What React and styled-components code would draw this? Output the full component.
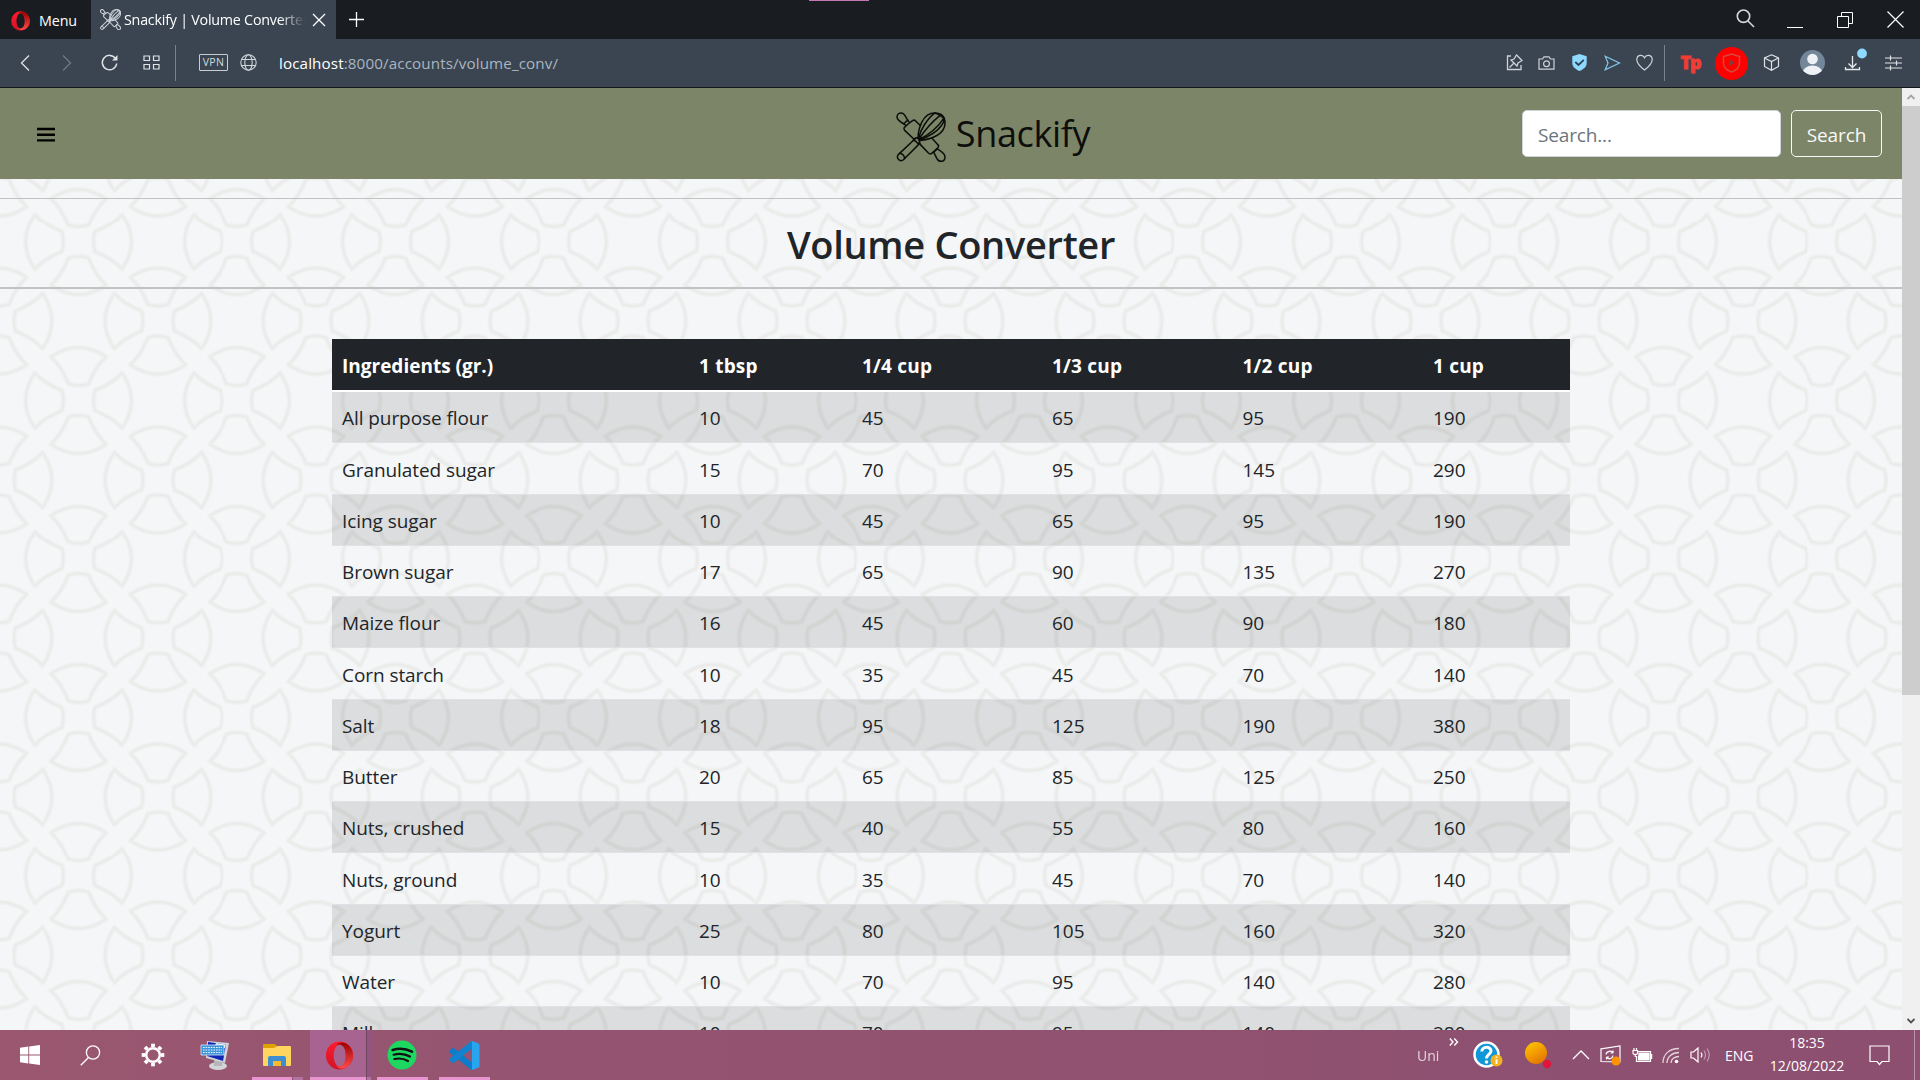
import React from "react";
import styled, { createGlobalStyle } from "styled-components";

const ui = `"Open Sans", "Noto Sans", sans-serif`;

const petal = "M-10 -16.500Q0 -13.500 10 -16.500Q17 -34 27.500 -43.500Q0 -62 -27.500 -43.500Q-17 -34 -10 -16.500Z";
const tile = `<svg xmlns='http://www.w3.org/2000/svg' width='158.5' height='158.5' viewBox='0 0 158.5 158.5'><defs><g id='p'><path d='${petal}'/><path d='${petal}' transform='rotate(90)'/><path d='${petal}' transform='rotate(180)'/><path d='${petal}' transform='rotate(270)'/></g><g id='c' fill='none' stroke-linejoin='round'><use href='#p' stroke='#f0f2f2' stroke-width='5.4'/><use href='#p' stroke='#ebecea' stroke-width='2.4'/></g></defs><use href='#c' x='79.25' y='79.25'/><use href='#c'/><use href='#c' x='158.5'/><use href='#c' y='158.5'/><use href='#c' x='158.5' y='158.5'/></svg>`;
const patternUrl = `url("data:image/svg+xml,${encodeURIComponent(tile).replace(/'/g, "%27").replace(/\(/g, "%28").replace(/\)/g, "%29")}")`;

const GlobalStyle = createGlobalStyle`
  * { box-sizing: border-box; }
  html, body { margin: 0; padding: 0; overflow: hidden; }
  body { font-family: ${ui}; }
  svg { display: block; flex: none; }
`;

const Screen = styled.div`
  width: 1920px;
  height: 1080px;
  display: flex;
  flex-direction: column;
  overflow: hidden;
`;

/* ---------- browser chrome ---------- */

const TabBar = styled.div`
  height: 39px;
  display: flex;
  align-items: stretch;
  background: #191d21;
  color: #fff;
  position: relative;
`;

const TopMarker = styled.div`
  position: absolute;
  left: 809px;
  top: 0;
  width: 60px;
  height: 1px;
  background: #c377b0;
`;

const MenuButton = styled.div`
  width: 91px;
  padding: 2px 0 0 11px;
  display: flex;
  align-items: center;
  gap: 9px;
  font-size: 14.3px;
  letter-spacing: -0.1px;
`;

const Tab = styled.div`
  width: 245px;
  background: #3a4551;
  display: flex;
  align-items: center;
  padding: 0 10px 0 9px;
`;

const TabTitle = styled.div`
  width: 181px;
  margin: 0 7px 0 3px;
  overflow: hidden;
  white-space: nowrap;
  font-size: 14.3px;
  letter-spacing: -0.23px;
  mask-image: linear-gradient(90deg, #000 86%, transparent 100%);
`;

const NewTab = styled.div`
  padding: 0 0 2px 12px;
  display: flex;
  align-items: center;
`;

const WindowControls = styled.div`
  margin-left: auto;
  display: flex;
`;

const Slot = styled.div`
  width: ${(p) => p.$w}px;
  display: flex;
  align-items: center;
  justify-content: center;
`;

const Toolbar = styled.div`
  height: 49px;
  background: #3a4551;
  border-bottom: 1px solid #14171b;
  display: flex;
  align-items: stretch;
  padding: 0 6px 1px 4px;
`;

const Divider = styled.div`
  width: 1px;
  margin: 6px ${(p) => p.$right}px 5px ${(p) => p.$left}px;
  background: #79828c;
`;

const VpnBadge = styled.div`
  width: 29px;
  height: 17px;
  align-self: center;
  border: 1px solid #c9ced3;
  border-radius: 1px;
  color: #d5d9dd;
  font-size: 10.5px;
  line-height: 15px;
  letter-spacing: 0.4px;
  text-align: center;
  margin: 0 12px 1px 23px;
`;

const GlobeSlot = styled.div`
  align-self: center;
  margin-bottom: 1px;
`;

const Address = styled.div`
  align-self: center;
  margin: 0 0 0 22px;
  font-size: 15.2px;
  letter-spacing: 0.12px;
  color: #a9b5c0;
  span { color: #fff; }
`;

const ToolbarRight = styled.div`
  margin-left: auto;
  display: flex;
`;

const TpLogo = styled.div`
  color: #f23c36;
  font-family: "Open Sans", sans-serif;
  font-weight: 800;
  font-size: 18px;
  line-height: 20px;
  letter-spacing: -1.3px;
  margin-bottom: 2px;
  -webkit-text-stroke: 0.8px #f23c36;
`;

const RedBadge = styled.div`
  width: 33px;
  height: 33px;
  border-radius: 50%;
  background: #f00;
  display: flex;
  align-items: center;
  justify-content: center;
  margin-top: 1px;
`;

/* ---------- page ---------- */

const Viewport = styled.div`
  height: 942px;
  display: flex;
`;

const Page = styled.main`
  width: 1902px;
  overflow: hidden;
  background: #f4f6f8 ${patternUrl};
  background-size: 158.5px 158.5px;
  background-position: -0.8px 74.7px;
  color: #212529;
`;

const Navbar = styled.header`
  height: 91px;
  background: #7c8567;
  display: grid;
  grid-template-columns: 1fr auto 1fr;
  align-items: center;
  padding: 0 20px 0 37px;
`;

const MenuToggle = styled.div`
  padding-top: 2px;
`;

const Brand = styled.div`
  display: flex;
  align-items: center;
  gap: 10px;
  color: #0d0e0b;
  height: 50px;
  margin: 6px 0 0 67px;
`;

const BrandName = styled.span`
  font-size: 36px;
  line-height: 50px;
  letter-spacing: -0.35px;
  margin-top: -6px;
`;

const SearchForm = styled.div`
  display: flex;
  justify-content: flex-end;
  gap: 10px;
`;

const SearchBox = styled.div`
  width: 259px;
  height: 47px;
  border: 1px solid #ced4da;
  border-radius: 5px;
  background: #fff;
  color: #6c757d;
  font-size: 19px;
  letter-spacing: -0.15px;
  line-height: 48px;
  padding-left: 15px;
`;

const SearchButton = styled.div`
  width: 91px;
  height: 47px;
  border: 1px solid #f8f9fa;
  border-radius: 5px;
  color: #f8f9fa;
  font-size: 19px;
  letter-spacing: -0.1px;
  line-height: 48px;
  text-align: center;
`;

const Rule = styled.div`
  height: ${(p) => p.$h}px;
  background: #c0c2c3;
`;

const TitleBand = styled.section`
  margin-top: 19px;
`;

const Title = styled.h1`
  margin: 0;
  height: 88px;
  padding-top: 1px;
  line-height: 88px;
  font-size: 38px;
  font-weight: 600;
  letter-spacing: -0.3px;
  text-align: center;
`;

const Table = styled.div`
  width: 1238px;
  margin: 50px auto 0;
  font-size: 19px;
`;

const Row = styled.div`
  display: grid;
  grid-template-columns: 357px 163px 190px 190.5px 190.5px 147px;
  align-items: center;
  height: 51.25px;
  padding-top: 2px;
  border-bottom: 1px solid #dee2e6;
  background: ${(p) => (p.$odd ? "rgba(0,0,0,0.1)" : "transparent")};
`;

const HeadRow = styled(Row)`
  height: 53.2px;
  padding-top: 3px;
  background: #212529;
  border-bottom: 2px solid #fff;
  color: #fff;
  font-weight: 700;
`;

const Cell = styled.div`
  padding-left: 10px;
  white-space: nowrap;
  letter-spacing: ${(p) => p.$ls || 0}px;
`;

const Scrollbar = styled.div`
  width: 18px;
  background: #f0f0f0;
  display: flex;
  flex-direction: column;
`;

const ScrollArrow = styled.div`
  height: 18px;
  display: flex;
  align-items: center;
  justify-content: center;
`;

const Thumb = styled.div`
  height: 589px;
  margin-bottom: auto;
  background: #cdcdcd;
`;

/* ---------- taskbar ---------- */

const Taskbar = styled.footer`
  height: 50px;
  display: flex;
  background: linear-gradient(90deg, #9a576f 0%, #935371 35%, #8c4f70 100%);
  color: #fff;
`;

const Task = styled.div`
  width: ${(p) => p.$w || 62}px;
  margin-right: ${(p) => p.$gap || 0}px;
  display: flex;
  flex-direction: column;
  align-items: center;
`;

const TaskIcon = styled.div`
  height: 47px;
  width: ${(p) => (p.$active ? 59 : 40)}px;
  align-self: ${(p) => (p.$active ? "flex-start" : "center")};
  display: flex;
  align-items: center;
  justify-content: center;
  padding-top: 3px;
`;

const ActiveTask = styled(Task)`
  margin-left: 2px;
  width: 61px;
  background: linear-gradient(90deg, #a86491 56px, #6f4560 56px, #6f4560 57px, #905680 57px);
`;

const Underline = styled.div`
  height: 3px;
  width: ${(p) => p.$w}px;
  background: ${(p) =>
    p.$stack ? `linear-gradient(90deg, #e794d1 ${p.$stack}px, #8a4f73 ${p.$stack}px, #8a4f73 ${p.$stack + 1}px, #b373a0 ${p.$stack + 1}px)` : "#e794d1"};
`;

const Tray = styled.div`
  margin-left: auto;
  display: flex;
  align-items: center;
`;

const TrayLabel = styled.div`
  font-size: 14px;
  width: ${(p) => p.$w}px;
  letter-spacing: ${(p) => p.$ls || 0}px;
  opacity: ${(p) => p.$o || 1};
  white-space: nowrap;
`;

const Chevrons = styled.div`
  width: 23px;
  height: 36px;
`;

const Clock = styled.div`
  width: 74px;
  display: flex;
  flex-direction: column;
  align-items: center;
  white-space: nowrap;
  font-size: 14px;
  line-height: 23px;
  letter-spacing: 0;
  margin-bottom: 2px;
`;

const DesktopEdge = styled.div`
  width: 6px;
  height: 50px;
  border-left: 1px solid #bb93a9;
`;

/* ---------- drawings ---------- */

const Line = ({ w = 16, h = w, box, c = "#dfe3e6", sw = 1.3, children }) => (
  <svg width={w} height={h} viewBox={box || `0 0 ${w} ${h}`} fill="none" stroke={c} strokeWidth={sw}>
    {children}
  </svg>
);

const WhiskPin = ({ size, c, sw }) => (
  <svg width={size} height={size} viewBox="0 0 49 49" fill="none" stroke={c} strokeWidth={sw} strokeLinejoin="round" strokeLinecap="round">
    <path d="M7.500 11.500C5 10 1 8.500 1 5C1 2.500 3 1 5 1C8.500 1 9.500 5 11.500 8L7.500 11.500Z" />
    <path d="M11.500 12L8 15.500Q7.500 17 8.500 18L18.500 27.500M11.500 12L16.500 8.200Q18 7.500 19.500 9L24 13.500M11.500 8L12.500 9.500M7.500 11.500L9.500 13" />
    <path d="M19.500 25.500L2.500 41.500C-.5 45 4 50 7.500 46.500L23.500 30.500" />
    <path d="M3.500 40.500Q7.800 41 8.500 45.500" />
    <path d="M17 27.500Q19 24.500 21.500 25.500Q24.500 28 22 31.500Q20 28.500 17 27.500Z" />
    <path d="M21.500 25.500C22 16 26 1 38 1C45 1 48 5 48 11C48 22 34 27 23 28Z" />
    <path d="M22 26C24 17 31 6 38 1M22.500 26.500C28 18 36 9 43.500 3M22.500 27C31 23 41 15 47 6" />
    <path d="M38 1Q44 3 46.500 6Q48 9 44 14Q38 22 23 27.500" />
    <path d="M23.500 31.500L31.500 40Q33.500 42 35 40.500L41 35Q42.500 33.500 41 32L35.500 26" />
    <path d="M37 39.500L40.500 36C43.500 38.500 48 40 48 44C48 49 42 50 40 45.500Z" />
  </svg>
);

const OperaO = ({ w, h }) => (
  <svg width={w} height={h} viewBox="0 0 28 30">
    <defs>
      <linearGradient id="opA" x1="0" y1="0" x2="0" y2="1">
        <stop offset="0" stopColor="#ff1b2d" />
        <stop offset="1" stopColor="#d31325" />
      </linearGradient>
      <linearGradient id="opB" x1="0" y1="0" x2="0" y2="1">
        <stop offset="0" stopColor="#9c0000" />
        <stop offset="1" stopColor="#ff4b4b" />
      </linearGradient>
    </defs>
    <path fillRule="evenodd" fill="url(#opA)" d="M14 0.500a14 14.500 0 1 0 0 29a14 14.500 0 1 0 0 -29zM14.500 3.500c4 0 6 5.500 6 11.500s-2 11.500-6 11.500s-6.500-5.500-6.500-11.500s2.500-11.500 6.500-11.500z" />
    <path fill="url(#opB)" d="M10.500 4.500C14 0 20 1 23.500 4.500C29.500 10 29.500 20 23.500 25.500C20 29 14 30 10.500 25.500C17 28.500 20.500 22 20.500 15S17 1.500 10.500 4.500z" />
  </svg>
);

const headers = ["Ingredients (gr.)", "1 tbsp", "1/4 cup", "1/3 cup", "1/2 cup", "1 cup"];
const rows = [
  ["All purpose flour", 10, 45, 65, 95, 190],
  ["Granulated sugar", 15, 70, 95, 145, 290],
  ["Icing sugar", 10, 45, 65, 95, 190],
  ["Brown sugar", 17, 65, 90, 135, 270],
  ["Maize flour", 16, 45, 60, 90, 180],
  ["Corn starch", 10, 35, 45, 70, 140],
  ["Salt", 18, 95, 125, 190, 380],
  ["Butter", 20, 65, 85, 125, 250],
  ["Nuts, crushed", 15, 40, 55, 80, 160],
  ["Nuts, ground", 10, 35, 45, 70, 140],
  ["Yogurt", 25, 80, 105, 160, 320],
  ["Water", 10, 70, 95, 140, 280],
  ["Milk", 10, 70, 95, 140, 280],
];

function BrowserChrome() {
  return (
    <>
      <TabBar>
        <TopMarker />
        <MenuButton>
          <OperaO w={19} h={20} />
          Menu
        </MenuButton>
        <Tab>
          <WhiskPin size={21} c="#c9cfd4" sw={2.4} />
          <TabTitle>Snackify | Volume Converter</TabTitle>
          <Line w={14} c="#fff"><path d="M1 1L13 13M13 1L1 13" /></Line>
        </Tab>
        <NewTab>
          <Line w={16} c="#fff"><path d="M8.500 1V16M1 8.500H16" /></Line>
        </NewTab>
        <WindowControls>
          <Slot $w={50}><Line w={19} h={21} c="#d6d8da" sw={1.6}><circle cx="7.500" cy="7.200" r="6.200" /><path d="M12 12L18 18" /></Line></Slot>
          <Slot $w={50}><Line w={16} h={16} c="#fff" sw={1}><path d="M0 15.500H16" /></Line></Slot>
          <Slot $w={50}><Line w={16} c="#fff" sw={1}><path d="M.5 4.500H11.500V15.500H.5ZM4.500 4V.5H15.500V11.500H12" /></Line></Slot>
          <Slot $w={50}><Line w={17} c="#fff" sw={1.2}><path d="M.5 .5L16.500 16.500M16.500 .5L.5 16.500" /></Line></Slot>
        </WindowControls>
      </TabBar>
      <Toolbar>
        <Slot $w={42}><Line w={10} h={16}><path d="M9 .5L1.500 8L9 15.500" /></Line></Slot>
        <Slot $w={42}><Line w={10} h={16} c="#6f7983"><path d="M1 .5L8.500 8L1 15.500" /></Line></Slot>
        <Slot $w={42}>
          <Line w={17} sw={1.5}><path d="M14.500 4.500A7.200 7.200 0 1 0 15.700 9.500" /><path d="M16.500 1V6.500H11Z" fill="#dfe3e6" stroke="none" /></Line>
        </Slot>
        <Slot $w={42}>
          <Line w={17} h={15} sw={1.2}><path d="M1 1H6.500V5.500H1ZM10.500 1H16V5.500H10.500ZM1 9.500H6.500V14H1ZM10.500 9.500H16V14H10.500Z" /></Line>
        </Slot>
        <Divider $left={3} $right={0} />
        <VpnBadge>VPN</VpnBadge>
        <GlobeSlot>
          <Line w={17} sw={1.1} c="#d0d5d9"><circle cx="8.500" cy="8.500" r="7.700" /><ellipse cx="8.500" cy="8.500" rx="3.700" ry="7.700" /><path d="M1.500 5.500H15.500M1.500 11.500H15.500" /></Line>
        </GlobeSlot>
        <Address><span>localhost</span>:8000/accounts/volume_conv/</Address>
        <ToolbarRight>
          <Slot $w={32.6}><Line w={17} c="#cdd3d8" sw={1.3}><path d="M5 2H1.500V15.500H15V11" /><path d="M10.500 1L16 6.500L14.500 7.500L12 9L11 12L5 6L8 5L9.500 2.500ZM8 9L3.500 13.500" /></Line></Slot>
          <Slot $w={32.6}><Line w={17} h={14} c="#cdd3d8" sw={1.2}><path d="M1 3H4.500L6 .8H11L12.500 3H16V13.200H1Z" /><circle cx="8.500" cy="7.700" r="2.900" /></Line></Slot>
          <Slot $w={32.6}>
            <svg width="15" height="17" viewBox="0 0 15 17"><path fill="#8fd8ff" d="M7.500 0L14.700 2.200V9C14.700 13 11 15.500 7.500 17C4 15.500 .3 13 .3 9V2.200Z" /><path fill="none" stroke="#2c4455" strokeWidth="1.800" d="M3.300 8L6.500 11L11.800 5.800" /></svg>
          </Slot>
          <Slot $w={32.6}><Line w={17} h={16} c="#84c9ee" sw={1.2}><path d="M1.200 1.300L15.500 8L1.200 14.700L4 8Z" /></Line></Slot>
          <Slot $w={32.6}><Line w={17} h={18} c="#cdd3d8" sw={1.2}><path d="M8.500 16C4 12.500 .8 9.500 .8 5.700C.8 .5 6.800 0 8.500 3.800C10.200 0 16.200 .5 16.200 5.700C16.200 9.500 13 12.500 8.500 16Z" /></Line></Slot>
          <Divider $left={3} $right={5} />
          <Slot $w={40.8}><TpLogo>Tp</TpLogo></Slot>
          <Slot $w={40.8}>
            <RedBadge>
              <svg width="19" height="20" viewBox="0 0 19 20"><path fill="none" stroke="#d8473c" strokeWidth="1.500" d="M9.500 1L17.500 3.500V10C17.500 14.500 14 17.500 9.500 19C5 17.500 1.500 14.500 1.500 10V3.500Z" /><path fill="#7d3f3a" d="M7 6V13.500L12.800 9.700Z" /></svg>
            </RedBadge>
          </Slot>
          <Slot $w={40.6}><Line w={17} sw={1.2}><path d="M8.500 .8L15.500 4V12.500L8.500 16.200L1.500 12.500V4ZM1.500 4L8.500 7.500L15.500 4M8.500 7.500V16" /></Line></Slot>
          <Slot $w={40.6}>
            <svg width="25" height="25" viewBox="0 0 25 25"><defs><clipPath id="av"><circle cx="12.500" cy="12.500" r="12.500" /></clipPath></defs><g clipPath="url(#av)"><rect width="25" height="25" fill="#74869a" /><circle cx="12.500" cy="9" r="5.300" fill="#eef2f6" /><ellipse cx="12.500" cy="22" rx="9.500" ry="6.500" fill="#eef2f6" /></g></svg>
          </Slot>
          <Slot $w={40.6}>
            <svg width="28" height="30" viewBox="0 0 28 30"><path fill="none" stroke="#e6e9eb" strokeWidth="1.300" d="M13.500 8V19.500M9.500 15.500L13.500 19.500L17.500 15.500M6.500 19V21.500H20.500V19" /><circle cx="23" cy="5.500" r="4.900" fill="#8fd8ff" /></svg>
          </Slot>
          <Slot $w={40.6}><Line w={17} h={16} c="#dfe3e6" sw={1.2}><path d="M0 3H17M0 8H17M0 13H17M5.500 .5V5.500M11.500 5.500V10.500M5.500 10.500V15.500" /></Line></Slot>
        </ToolbarRight>
      </Toolbar>
    </>
  );
}

function WindowsTaskbar() {
  return (
    <Taskbar>
      <Task $w={60}>
        <TaskIcon><svg width="20" height="20" viewBox="0 0 20 20" fill="#fff"><path d="M0 2.700L8.300 1.500V9.500H0ZM9.200 1.400L20 0V9.500H9.200ZM0 10.500H8.300V18.500L0 17.300ZM9.200 10.500H20V20L9.200 18.600Z" /></svg></TaskIcon>
      </Task>
      <Task $w={60} $gap={2}>
        <TaskIcon><Line w={21} c="#fff" sw={1.3}><circle cx="13" cy="7.500" r="6.600" /><path d="M8.500 12.500L.8 20.300" /></Line></TaskIcon>
      </Task>
      <Task>
        <TaskIcon>
          <svg width="24" height="24" viewBox="-12 -12 24 24" fill="none" stroke="#fff">
            <circle r="6.800" strokeWidth="2.500" />
            {[0, 45, 90, 135, 180, 225, 270, 315].map((a) => (
              <path key={a} d="M0 -8V-11.300" strokeWidth="3.800" transform={`rotate(${a})`} />
            ))}
          </svg>
        </TaskIcon>
      </Task>
      <Task>
        <TaskIcon>
          <svg width="30" height="30" viewBox="0 0 30 30">
            <ellipse cx="18" cy="26" rx="9" ry="4" fill="#d2d4d6" /><path d="M14 20H22V26H14Z" fill="#b4b7ba" />
            <path d="M7 1L29 3L25 23L6 18Z" fill="#cfd5da" /><path d="M8 2L26 4.500L23 21L7 16Z" fill="#1226b5" /><path d="M16 3L26 4.500L25 8H14Z" fill="#e9edf5" />
            <path d="M1 5H24V15H1Z" fill="#3d96dc" stroke="#dbe9f5" strokeWidth=".8" />
            <path d="M3 7.500H22M3 10H22M3 12.500H22" stroke="#eaf5ff" strokeWidth="1" strokeDasharray="1.600 1" />
          </svg>
        </TaskIcon>
      </Task>
      <Task>
        <TaskIcon>
          <svg width="28" height="24" viewBox="0 0 28 24">
            <path fill="#e0a000" d="M0 2Q0 1 1 1H12L14 3H13V6H0Z" /><path fill="#ffd45f" d="M0 5H11L14 3H27Q28 3 28 4V22Q28 23 27 23H1Q0 23 0 22Z" />
            <path fill="#3d8fd1" d="M5 23V15Q5 13 7 13H21Q23 13 23 15V23H18V18H10V23Z" /><path fill="#f5b92e" d="M10 18H18V23H10Z" />
          </svg>
        </TaskIcon>
        <Underline $w={51} $stack={40} />
      </Task>
      <ActiveTask>
        <TaskIcon $active><OperaO w={29} h={29} /></TaskIcon>
        <Underline $w={61} $stack={56} />
      </ActiveTask>
      <Task>
        <TaskIcon>
          <svg width="30" height="30" viewBox="0 0 30 30"><circle cx="15" cy="15" r="14.500" fill="#1ed760" /><path fill="none" stroke="#101010" strokeLinecap="round" strokeWidth="2.600" d="M5.700 10C12 8 19 8.600 25 11.700" /><path fill="none" stroke="#101010" strokeLinecap="round" strokeWidth="2.200" d="M6.600 14.700C12 13.200 18 13.700 23 16.500M7.400 19C12 18 16.500 18.300 21 21" /></svg>
        </TaskIcon>
        <Underline $w={51} />
      </Task>
      <Task>
        <TaskIcon>
          <svg width="31" height="31" viewBox="0 0 31 31"><path fill="#0a7ccb" d="M.8 10.500L3 8.300Q4 7.700 5 8.300L23 22.500V30.500L.8 12.700Q0 11.500 .8 10.500Z" /><path fill="#1283d0" d="M.8 20.500L3 22.700Q4 23.300 5 22.700L23 8.500V.5L.8 18.300Q0 19.500 .8 20.500Z" /><path fill="#27a5ee" d="M22 .5L29.500 3.500Q30.500 4 30.500 5V26Q30.500 27 29.500 27.500L22 30.500Q23 29.800 23 28V3Q23 1.200 22 .5Z" /></svg>
        </TaskIcon>
        <Underline $w={51} />
      </Task>

      <Tray>
        <TrayLabel $w={32} $o={0.75}>Uni</TrayLabel>
        <Chevrons><Line w={10} h={10} c="#fff" sw={1.4}><path d="M.8 1.500L4 5L.8 8.500M5.300 1.500L8.500 5L5.300 8.500" /></Line></Chevrons>
        <Slot $w={31}>
          <svg width="30" height="28" viewBox="0 0 30 28"><circle cx="13.500" cy="13.500" r="12" fill="#0f97d8" stroke="#fff" strokeWidth="2.500" /><path d="M8.800 10.500C9 5 18 5 18 10C18 13.500 13.500 13.500 13.500 17.500" fill="none" stroke="#fff" strokeWidth="3" /><circle cx="13.500" cy="21" r="1.800" fill="#fff" /><circle cx="23.500" cy="19.500" r="6" fill="#f3b321" /><path d="M23.500 15.500V17M23.500 18.300V23" stroke="#fff" strokeWidth="1.800" /></svg>
        </Slot>
        <Slot $w={69}>
          <svg width="28" height="28" viewBox="0 0 28 28"><defs><linearGradient id="or" x1=".2" y1="0" x2=".8" y2="1"><stop offset="0" stopColor="#ffc400" /><stop offset="1" stopColor="#e26f00" /></linearGradient></defs><circle cx="12" cy="12" r="11" fill="url(#or)" /><circle cx="23" cy="23" r="4.200" fill="#e0143c" /></svg>
        </Slot>
        <Slot $w={18}><Line w={18} h={10} c="#fff" sw={1.3}><path d="M1 9L9 1L17 9" /></Line></Slot>
        <Slot $w={41}><svg width="21" height="21" viewBox="0 0 21 21" fill="none" stroke="#fff" strokeWidth="1.200"><path d="M1 3.800L20 1V17L1 16.500Z" /><path d="M6 9.500C6.500 6 11.500 5 13 8V5.500M13 8H10.500M13 10.500C12.500 14 8 15 6.500 12V14.500M6.500 12H9" /><circle cx="16" cy="16" r="4.500" fill="#ff9200" stroke="none" /></svg></Slot>
        <Slot $w={22}><svg width="21" height="15" viewBox="0 0 21 15" fill="none" stroke="#fff" strokeWidth="1.200"><path d="M6 3.500H18.500V13.500H4.500V8" /><path d="M7 5H17V12H6.500V8H7Z" fill="#fff" /><path d="M19.500 6V11" strokeWidth="1.500" /><path d="M1 2.500H5.500V5Q5.500 6.500 3.300 6.500Q1 6.500 1 5ZM2 0V2.500M4.500 0V2.500M3.300 6.500V9" /></svg></Slot>
        <Slot $w={35}><svg width="18" height="17" viewBox="0 0 18 17" fill="none" stroke="#fff" strokeWidth="1.300"><path d="M1 16C1 7 7.500 1.500 17 1.500M5 16C5 10 10 5.500 17 5.500M9 16C9 12 12.500 9.500 17 9.500" opacity=".75" /><circle cx="14.500" cy="14.500" r="1.800" fill="#fff" stroke="none" /></svg></Slot>
        <Slot $w={24}><svg width="21" height="16" viewBox="0 0 21 16" fill="none" stroke="#fff" strokeWidth="1.200"><path d="M1 5H3.500L8 1V15L3.500 11H1Z" /><path d="M11 5.500Q12.800 8 11 10.500" /><path d="M14 3.500Q17 8 14 12.500M17 1.500Q21.500 8 17 14.500" opacity=".45" /></svg></Slot>
        <Slot $w={13} />
        <TrayLabel $w={45} $ls={0}>ENG</TrayLabel>
        <Clock><span>18:35</span><span>12/08/2022</span></Clock>
        <Slot $w={70}><Line w={21} h={21} c="#fff" sw={1.2}><path d="M1 1H20V16.500H13L10.500 19.500L8 16.500H1Z" /></Line></Slot>
        <DesktopEdge />
      </Tray>
    </Taskbar>
  );
}

export default function App() {
  return (
    <Screen>
      <GlobalStyle />
      <BrowserChrome />
      <Viewport>
        <Page>
          <Navbar>
            <MenuToggle><Line w={18} h={15} c="#000" sw={2.4}><path d="M0 2H18M0 7.700H18M0 13.400H18" /></Line></MenuToggle>
            <Brand>
              <WhiskPin size={50} c="#0d0e0b" sw={1.5} />
              <BrandName>Snackify</BrandName>
            </Brand>
            <SearchForm>
              <SearchBox>Search...</SearchBox>
              <SearchButton>Search</SearchButton>
            </SearchForm>
          </Navbar>
          <TitleBand>
            <Rule $h={1} />
            <Title>Volume Converter</Title>
            <Rule $h={2} />
          </TitleBand>
          <Table>
            <HeadRow>
              {headers.map((h, i) => <Cell key={h} $ls={i ? 0.2 : 0}>{h}</Cell>)}
            </HeadRow>
            {rows.map((r, i) => (
              <Row key={r[0]} $odd={i % 2 === 0}>
                {r.map((v, j) => <Cell key={j} $ls={j ? 0 : -0.07}>{v}</Cell>)}
              </Row>
            ))}
          </Table>
        </Page>
        <Scrollbar>
          <ScrollArrow><Line w={8} h={6} c="#a3a3a3" sw={1.8}><path d="M.5 5L4 1.500L7.500 5" /></Line></ScrollArrow>
          <Thumb />
          <ScrollArrow><Line w={8} h={6} c="#505050" sw={1.8}><path d="M.5 1L4 4.500L7.500 1" /></Line></ScrollArrow>
        </Scrollbar>
      </Viewport>
      <WindowsTaskbar />
    </Screen>
  );
}
